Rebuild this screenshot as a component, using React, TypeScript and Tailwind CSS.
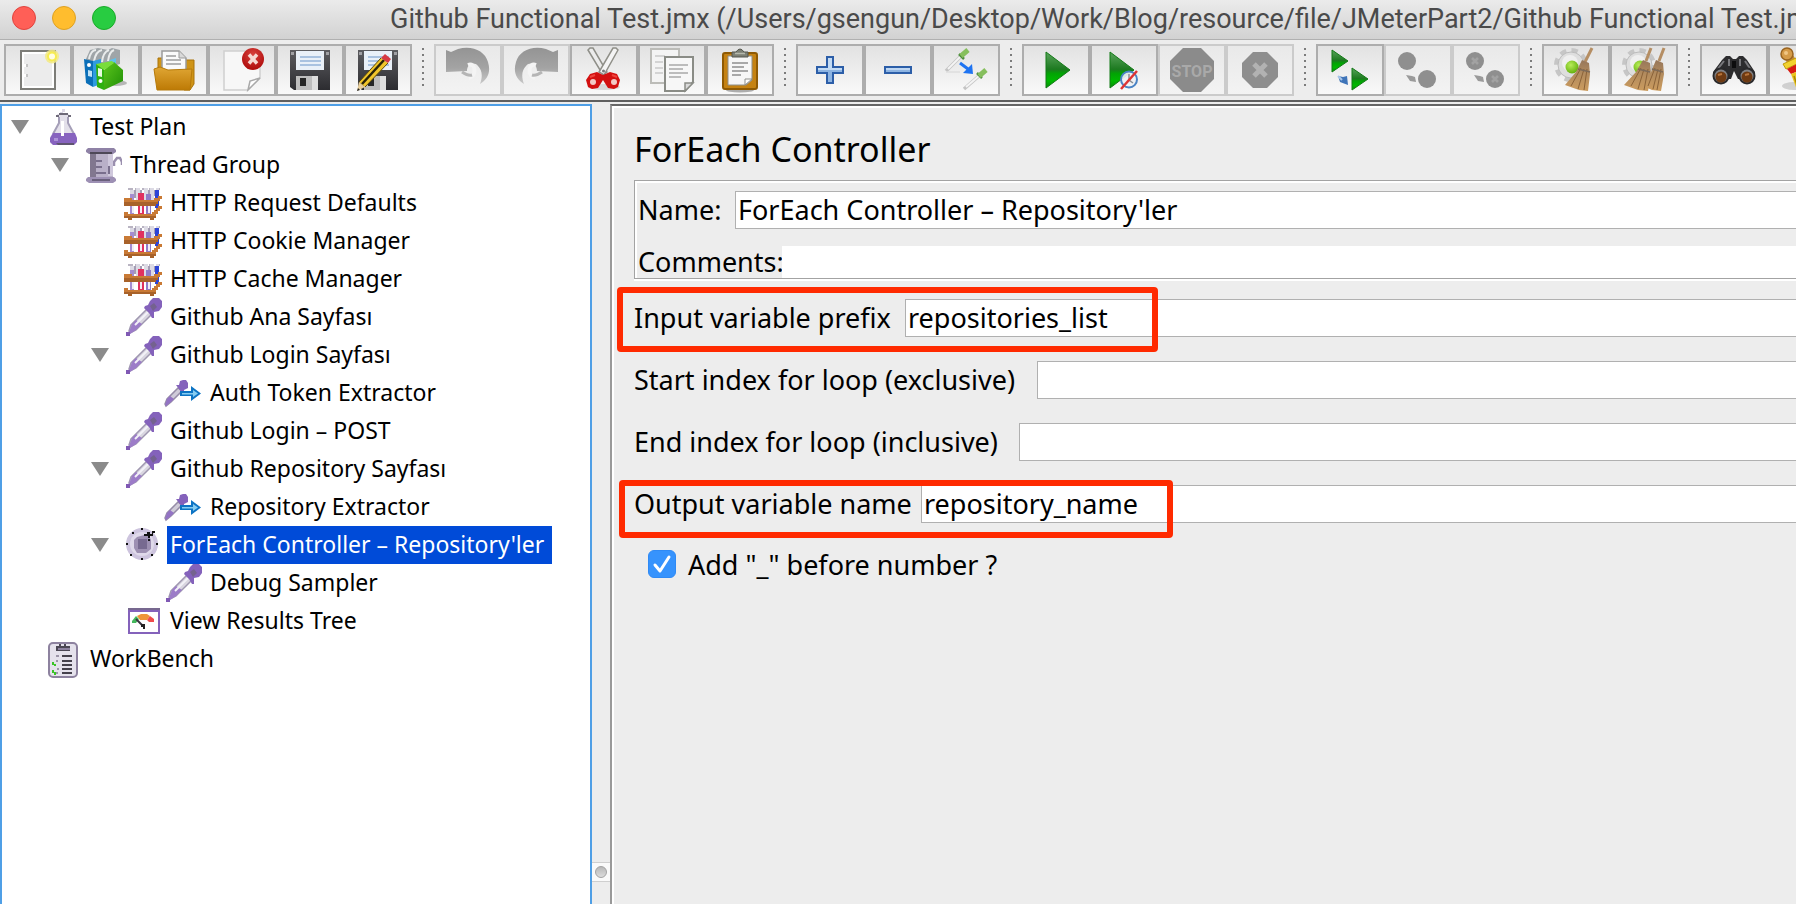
import { Fragment, type ReactNode } from "react";

/* ---------- toolbar icons (68 x 52 grid, one cell per button) ---------- */

const Defs = () => (
  <svg className="absolute size-0" aria-hidden="true">
    <defs>
      <linearGradient id="gold" x1="0" y1="0" x2="0" y2="1">
        <stop offset="0" stopColor="#e0a634" />
        <stop offset="1" stopColor="#bd7a05" />
      </linearGradient>
      <linearGradient id="disk" x1="0" y1="0" x2="0" y2="1">
        <stop offset="0" stopColor="#5c5c60" />
        <stop offset="1" stopColor="#2c2c30" />
      </linearGradient>
      <linearGradient id="play" x1="0" y1="0" x2="0" y2="1">
        <stop offset="0" stopColor="#5aa45c" />
        <stop offset="0.48" stopColor="#1d7a20" />
        <stop offset="0.6" stopColor="#02a404" />
        <stop offset="0.8" stopColor="#00b800" />
        <stop offset="1" stopColor="#068c08" />
      </linearGradient>
      <linearGradient id="fade" x1="0" y1="0" x2="0" y2="1">
        <stop offset="0" stopColor="#949494" />
        <stop offset="0.55" stopColor="#a3a3a3" />
        <stop offset="1" stopColor="#c9c9c9" />
      </linearGradient>
      <linearGradient id="green" x1="0" y1="0" x2="1" y2="1">
        <stop offset="0" stopColor="#5cc51d" />
        <stop offset="1" stopColor="#1f8f06" />
      </linearGradient>
      <linearGradient id="straw" x1="0" y1="0" x2="0" y2="1">
        <stop offset="0" stopColor="#96765a" />
        <stop offset="0.4" stopColor="#b08a5e" />
        <stop offset="1" stopColor="#cc9c5e" />
      </linearGradient>
      <radialGradient id="ball" cx="0.4" cy="0.35" r="0.7">
        <stop offset="0" stopColor="#b8ec5a" />
        <stop offset="1" stopColor="#5fae08" />
      </radialGradient>
      <radialGradient id="redball" cx="0.5" cy="0.3" r="0.8">
        <stop offset="0" stopColor="#d8413c" />
        <stop offset="1" stopColor="#a80404" />
      </radialGradient>
    </defs>
  </svg>
);

const NewIcon = () => (
  <>
    <rect x="17" y="7" width="34" height="38" fill="#fff" stroke="#7d7d78" strokeWidth="2" />
    <rect x="20" y="10" width="28" height="32" fill="#ececec" />
    <path d="M20 20h4v3h-4zM20 30h4v3h-4z" fill="#fff" />
    <path d="M22 20h2v3h-2zM22 30h2v3h-2z" fill="#c4c4c4" />
    <circle cx="48" cy="12.5" r="7" fill="#f3ea84" opacity="0.85" />
    <circle cx="48" cy="12.5" r="5" fill="#f7ec50" />
    <circle cx="48" cy="12.5" r="3" fill="#fffde0" />
  </>
);

const TemplatesIcon = () => (
  <>
    <ellipse cx="44" cy="39" rx="11" ry="3" fill="#000" opacity="0.25" />
    <path d="M14 15L18 6L26 4L36 6L40 4L48 6V20L34 24L14 20Z" fill="#9fa5a8" />
    <path d="M17 15q2-9 7-9M22 17q2-10 8-11M30 18q1-10 7-12M36 17q1-9 6-11" fill="none" stroke="#e9ecec" strokeWidth="2" />
    <path d="M38 16L44 14V20L34 22Z" fill="#5fc1ec" />
    <path d="M12 15L21 17V43L14 39Z" fill="#0b6fb8" />
    <path d="M21 17L29 15V40L21 43Z" fill="#2f9be0" />
    <circle cx="17" cy="21" r="2" fill="#fff" />
    <path d="M16 26l4 1v6l-4-1z" fill="#bfe2f7" />
    <path d="M24 20L32 22V46L25 43Z" fill="#2fb010" />
    <path d="M32 26L42 18L51 26V37L32 46Z" fill="url(#green)" />
    <path d="M24 20L40 17L42 19L32 26Z" fill="#79dd3a" />
    <path d="M26 24l4 1v8l-4-1z" fill="#e8fadf" />
    <circle cx="28.500" cy="37" r="2" fill="#fff" />
  </>
);

const OpenIcon = () => (
  <>
    <path d="M18 14H24V24H18ZM44 16H54V40L50 46H44Z" fill="#cf9417" stroke="#a9730a" strokeWidth="1" />
    <path d="M22 7H39L46 14V28H22Z" fill="#fafafa" stroke="#9b9b9b" strokeWidth="1.500" />
    <path d="M39 7V14H46" fill="#d9d9d9" stroke="#9b9b9b" />
    <path d="M26 12h10M26 16h15M26 20h15" stroke="#b4b4b4" strokeWidth="2" />
    <path d="M14 25L20 23L28 26L52 25L50 46H17Z" fill="url(#gold)" stroke="#b67a0a" strokeWidth="1" />
  </>
);

const CloseIcon = () => (
  <>
    <path d="M16 7H52V34L40 46H16Z" fill="#f7f7f7" stroke="#d0d0d0" strokeWidth="1.500" />
    <path d="M40 46L42 37L52 34Z" fill="#fff" stroke="#a9a9a9" strokeWidth="1.500" />
    <circle cx="45" cy="15" r="11" fill="url(#redball)" />
    <path d="M41 10.500L49 19.500M49 10.500L41 19.500" stroke="#f6d9d3" strokeWidth="3.500" />
  </>
);

const Disk = () => (
  <>
    <path d="M14 6H54V46H18L14 43Z" fill="url(#disk)" />
    <rect x="20" y="7" width="28" height="19" fill="#e9f0f8" />
    <path d="M24 13h21M24 17h21M24 21h21" stroke="#a9c2e0" strokeWidth="2" />
    <path d="M15 8h3v3h-3zM50 8h3v3h-3z" fill="#a0a0a4" />
    <rect x="20" y="32" width="22" height="14" fill="#bdbdbd" />
    <rect x="36" y="32" width="6" height="14" fill="#dedede" />
    <rect x="24" y="34" width="6" height="8" fill="#262626" />
  </>
);

const SaveAsIcon = () => (
  <>
    <Disk />
    <path d="M37 14L44 19L21 43L15 38Z" fill="#f0c52b" />
    <path d="M40 16L18 40" stroke="#2a2408" strokeWidth="2.500" />
    <path d="M37 14L15 38M44 19L21 43" stroke="#5d4b0a" strokeWidth="1" />
    <path d="M15 38L21 43L13 47Z" fill="#e8cf9c" />
    <path d="M13 47l1-3 2 2z" fill="#222" />
    <path d="M37 14L41 10L47 15L44 19Z" fill="#d63a44" />
  </>
);

const UndoIcon = () => (
  <>
    <path
      d="M12 6L17 8L24 5C38 1 51 7 54 18C57 28 54 35 46 40C49 32 48 26 44 22C40 17 33 20 33 27L12 28Z"
      fill="url(#fade)"
    />
    <path d="M34 21C42 18 43 32 35 34" fill="none" stroke="#f4f4f4" strokeWidth="4" />
    <path d="M28 28C31 30 35 32 38 31" fill="none" stroke="#b5b5b5" strokeWidth="3" />
  </>
);

const RedoIcon = () => (
  <g transform="matrix(-1 0 0 1 68 0)">
    <UndoIcon />
  </g>
);

const CutIcon = () => (
  <>
    <ellipse cx="34" cy="43" rx="16" ry="3" fill="#000" opacity="0.12" />
    <path d="M18 6L20 4H23L37 28L33 31Z" fill="#ececec" stroke="#8f8f88" strokeWidth="1.500" />
    <path d="M48 6L46 4H43L29 28L34 31Z" fill="#f4f4f4" stroke="#8f8f88" strokeWidth="1.500" />
    <path d="M20 30L27 28L33 31L40 28L47 30L50 36L48 43L44 45L38 44L33 36L28 44L22 45L18 43L16 36Z" fill="#d31010" />
    <circle cx="23" cy="38" r="3" fill="#f2c9c5" />
    <circle cx="44" cy="38" r="3" fill="#f2c9c5" />
    <path d="M20 33l5-2M42 31l5 2" stroke="#f0433c" strokeWidth="2" />
    <circle cx="33.500" cy="27" r="1.500" fill="#777" />
  </>
);

const CopyIcon = () => (
  <>
    <rect x="13" y="5" width="28" height="34" fill="#f4f4f4" stroke="#bcbcb8" strokeWidth="2" />
    <path d="M17 12h10M17 18h8M17 24h8M17 29h8" stroke="#d4d4d4" strokeWidth="2" />
    <path d="M27 13H55V38L47 47H27Z" fill="#f7f7f7" stroke="#8a8c86" strokeWidth="2" />
    <path d="M31 21h19M31 25h14M31 29h19M31 33h12" stroke="#bcbcbc" strokeWidth="2" />
    <path d="M47 47V39H55Z" fill="#dadada" stroke="#8a8c86" strokeWidth="1.500" />
  </>
);

const PasteIcon = () => (
  <>
    <ellipse cx="34" cy="46" rx="14" ry="2.500" fill="#000" opacity="0.3" />
    <rect x="17" y="9" width="34" height="36" rx="2" fill="#c58212" stroke="#8f5a04" strokeWidth="2" />
    <path d="M22 12H46V36L40 41H22Z" fill="#f6f6f6" stroke="#8f8f8a" strokeWidth="1" />
    <path d="M26 19h16M26 23h12M26 27h16M26 31h9" stroke="#a8a8a8" strokeWidth="2" />
    <path d="M39 41V35H46Z" fill="#fff" stroke="#8f8f8a" />
    <path d="M26 13V8H30Q34 2 38 8H42V13Z" fill="#7c7f74" stroke="#55574f" />
    <path d="M29 9.500h10" stroke="#b5b8ac" strokeWidth="1.500" />
  </>
);

const PlusIcon = () => (
  <>
    <path d="M31 13H37V23H47V29H37V39H31V29H21V23H31Z" fill="#8db4e2" stroke="#2c5ea8" strokeWidth="2" />
    <path d="M32 14h4v10h10v2H22v-2h10z" fill="#c3dbf4" />
  </>
);

const MinusIcon = () => (
  <>
    <rect x="21" y="23" width="26" height="6" fill="#8db4e2" stroke="#2c5ea8" strokeWidth="2" />
    <rect x="22" y="24" width="24" height="2" fill="#bfd7f2" />
  </>
);

const ToggleIcon = () => (
  <>
    <path d="M14 27L29 12" stroke="#c4c4c4" strokeWidth="3.500" />
    <path d="M16 25L29 12" stroke="#f4f4f4" strokeWidth="2" />
    <path d="M27 10L32 15" stroke="#4c8c3c" strokeWidth="2.500" />
    <path d="M29 12L36 6" stroke="#86bf5d" strokeWidth="5" />
    <path d="M14 28H28" stroke="#dedede" strokeWidth="1.500" />
    <path d="M32 45L48 31" stroke="#c4c4c4" strokeWidth="3.500" />
    <path d="M34 43L48 31" stroke="#f4f4f4" strokeWidth="2" />
    <path d="M45 29L50 34" stroke="#4c8c3c" strokeWidth="2.500" />
    <path d="M47 32L54 26" stroke="#86bf5d" strokeWidth="5" />
    <path d="M28 19L36 25" stroke="#1f74f2" strokeWidth="3" />
    <path d="M40 20L41 30L31 29Z" fill="#1f74f2" />
  </>
);

const StartIcon = () => <path d="M24 8L48 26L24 44Z" fill="url(#play)" stroke="#137a16" strokeWidth="1" />;

const StartNoPauseIcon = () => (
  <>
    <path d="M20 8L44 26L20 44Z" fill="url(#play)" stroke="#137a16" strokeWidth="1" />
    <circle cx="39" cy="35.500" r="8" fill="#eef1f4" fillOpacity="0.92" stroke="#4a83c4" strokeWidth="2" />
    <path d="M39 30v6l4 3" fill="none" stroke="#8b8f94" strokeWidth="1.500" />
    <path d="M31 45L47 27" stroke="#de3434" strokeWidth="2.500" />
  </>
);

const StopIcon = () => (
  <>
    <path d="M25 4H43L56 17V35L43 48H25L12 35V17Z" fill="#8b8b8b" />
    <text x="34" y="33" textAnchor="middle" fontSize="16" fontWeight="700" fill="#a9a9a9" className="font-['Roboto',sans-serif]">
      STOP
    </text>
  </>
);

const ShutdownIcon = () => (
  <>
    <path d="M27 8H41L52 19V33L41 44H27L16 33V19Z" fill="#8e8e8e" />
    <path d="M28 20L40 32M40 20L28 32" stroke="#b2b2b2" strokeWidth="5" />
  </>
);

const RemoteStartIcon = () => (
  <>
    <path d="M16 6L32 17L16 28Z" fill="url(#play)" stroke="#137a16" strokeWidth="1" />
    <path d="M36 24L52 35L36 46Z" fill="url(#play)" stroke="#137a16" strokeWidth="1" />
    <path d="M22 32L27 33L31 32L32 41L24 38Z" fill="#3f74b8" />
    <path d="M22 32l4 4" stroke="#a9c6ea" strokeWidth="2" />
  </>
);

const RemoteStopIcon = () => (
  <>
    <circle cx="23" cy="17" r="9" fill="#8f8f8f" />
    <circle cx="43" cy="35" r="9" fill="#8f8f8f" />
    <path d="M22 31L28 32L31 33L32 38L26 37Z" fill="#9a9a9a" />
  </>
);

const RemoteShutdownIcon = () => (
  <>
    <RemoteStopIcon />
    <path d="M20 14l6 6M26 14l-6 6M40 32l6 6M46 32l-6 6" stroke="#a2a2a2" strokeWidth="2.500" />
  </>
);

const Gear = () => (
  <>
    <circle cx="29" cy="21" r="14" fill="none" stroke="#c6c6c6" strokeWidth="6" strokeDasharray="6 5" />
    <circle cx="29" cy="21" r="13" fill="#dedede" stroke="#bcbcbc" strokeWidth="1" />
    <circle cx="28" cy="19" r="8" fill="#efefef" />
    <circle cx="30" cy="23" r="6.500" fill="url(#ball)" />
  </>
);

const ClearIcon = () => (
  <>
    <Gear />
    <path d="M50 4L43 18" stroke="#b58e63" strokeWidth="3" />
    <path d="M40 16L47 19L48 30L46 47L37 46L23 41L34 28Z" fill="url(#straw)" />
    <path d="M39 24L29 42M42 25L36 45M45 25L42 46" stroke="#8a6238" strokeWidth="1" />
    <path d="M36 25L48 28" stroke="#7d6a58" strokeWidth="1.500" />
  </>
);

const ClearAllIcon = () => (
  <>
    <Gear />
    <path d="M41 4L36 17M54 4L49 17" stroke="#b58e63" strokeWidth="3" />
    <path d="M33 16L40 19L41 30L38 47L28 46L14 41L26 28Z" fill="url(#straw)" />
    <path d="M46 16L53 19L54 30L51 47L42 46L33 42L41 28Z" fill="url(#straw)" />
    <path d="M31 24L21 42M34 25L28 45M38 25L34 46M45 24L38 42M48 25L43 45M51 25L47 46" stroke="#8a6238" strokeWidth="1" />
    <path d="M28 25L40 28M42 25L53 28" stroke="#7d6a58" strokeWidth="1.500" />
  </>
);

const SearchIcon = () => (
  <>
    <path d="M22 16L26 12H30L33 15H36L39 12H43L47 16L55 28V35H38L34 27L31 35H13V28Z" fill="#2c2c2e" />
    <path d="M24 17L17 26M45 17L51 26M29 15V22M40 15V22" stroke="#77777b" strokeWidth="2" />
    <path d="M32 17h4v7h-4z" fill="#0d0d0e" />
    <circle cx="21" cy="32" r="8.500" fill="#29292b" />
    <circle cx="47" cy="32" r="8.500" fill="#29292b" />
    <circle cx="21" cy="32" r="6.500" fill="#808083" />
    <circle cx="47" cy="32" r="6.500" fill="#808083" />
    <circle cx="21" cy="33" r="5.500" fill="#6e3a12" />
    <circle cx="47" cy="33" r="5.500" fill="#6e3a12" />
    <path d="M18 31l4-1M45 31l4-1" stroke="#b8743a" strokeWidth="2" />
  </>
);

const SearchResetIcon = () => (
  <>
    <ellipse cx="26" cy="42" rx="12" ry="4" fill="#000" opacity="0.15" />
    <path d="M19 10L24 18" stroke="#c48a3a" strokeWidth="9" />
    <circle cx="19" cy="10" r="6" fill="#d59b48" stroke="#9a6420" strokeWidth="1.500" />
    <circle cx="18" cy="9" r="2" fill="#f0c684" />
    <path d="M15 20L28 14L31 19L18 25Z" fill="#f2d22e" stroke="#c09a0c" />
    <path d="M19 25L31 19L36 25L23 30Z" fill="#d81a12" />
    <path d="M23 30L36 25L50 42L29 46Z" fill="#e9c41c" />
    <path d="M26 32l4 12M31 30l8 12" stroke="#a8860a" strokeWidth="1.500" />
  </>
);

type Tool = { name: string; icon: ReactNode; disabled?: boolean };

const toolGroups: Tool[][] = [
  [
    { name: "New", icon: <NewIcon /> },
    { name: "Templates", icon: <TemplatesIcon /> },
    { name: "Open", icon: <OpenIcon /> },
    { name: "Close", icon: <CloseIcon /> },
    { name: "Save", icon: <Disk /> },
    { name: "Save as", icon: <SaveAsIcon /> },
  ],
  [
    { name: "Undo", icon: <UndoIcon />, disabled: true },
    { name: "Redo", icon: <RedoIcon />, disabled: true },
    { name: "Cut", icon: <CutIcon /> },
    { name: "Copy", icon: <CopyIcon /> },
    { name: "Paste", icon: <PasteIcon /> },
  ],
  [
    { name: "Expand all", icon: <PlusIcon /> },
    { name: "Collapse all", icon: <MinusIcon /> },
    { name: "Toggle", icon: <ToggleIcon /> },
  ],
  [
    { name: "Start", icon: <StartIcon /> },
    { name: "Start no pauses", icon: <StartNoPauseIcon /> },
    { name: "Stop", icon: <StopIcon />, disabled: true },
    { name: "Shutdown", icon: <ShutdownIcon />, disabled: true },
  ],
  [
    { name: "Remote start all", icon: <RemoteStartIcon /> },
    { name: "Remote stop all", icon: <RemoteStopIcon />, disabled: true },
    { name: "Remote shutdown all", icon: <RemoteShutdownIcon />, disabled: true },
  ],
  [
    { name: "Clear", icon: <ClearIcon /> },
    { name: "Clear all", icon: <ClearAllIcon /> },
  ],
  [
    { name: "Search", icon: <SearchIcon /> },
    { name: "Reset search", icon: <SearchResetIcon /> },
  ],
];

const ToolButton = ({ tool }: { tool: Tool }) => (
  <button
    type="button"
    aria-label={tool.name}
    disabled={tool.disabled}
    className="h-[52px] w-[68px] shrink-0 border-2 border-[#adadad] bg-linear-to-b from-[#e2e2e2] to-[#f9f9f9] disabled:border-[#cbcbcb] disabled:from-[#e9e9e9] disabled:to-[#f3f3f3]"
  >
    <svg viewBox="2 2 64 48" className="block h-12 w-16" aria-hidden="true">
      {tool.icon}
    </svg>
  </button>
);

const ToolSeparator = () => (
  <div className="flex w-[22px] shrink-0 flex-col items-center gap-1 pt-1">
    {[0, 1, 2, 3, 4, 5, 6].map((n) => (
      <span key={n} className="size-[2px] bg-[#7c7c7c]" />
    ))}
  </div>
);

/* ---------- tree icons (38 x 38 grid) ---------- */

const FlaskIcon = () => (
  <>
    <path d="M18 1h3v3h-3zM16 4h3v3h-3z" fill="#dcd8e6" />
    <path d="M15 6h10v3h-2v6l9 14v6l-3 2H9l-3-2v-6l9-14V9h-2V6z" fill="#e3e0ea" />
    <path d="M12 7h3v2h-3zM24 7h3v2h-3zM15 5h9v2h-9z" fill="#6e6a78" />
    <path d="M15 9v6L9 26M24 9v6l6 11" fill="none" stroke="#a59fb8" strokeWidth="2" />
    <path d="M9 25h22l2 5v4l-3 3H9l-3-3v-4z" fill="#8763bf" />
    <path d="M17 13h3v15h-3z" fill="#fff" />
    <path d="M10 30h4v3h-4z" fill="#ad93d8" />
    <path d="M12 35h18v2H14z" fill="#5f5570" />
  </>
);

const BeakerIcon = () => (
  <>
    <path d="M30 20V16L33 12H36L38 16V19" fill="none" stroke="#9a8fae" strokeWidth="2.500" />
    <path d="M6 8H29V32H6Z" fill="#b9b0c8" />
    <path d="M6 8h6v24H6z" fill="#81778f" />
    <path d="M24 8h5v22h-5z" fill="#cfc8dc" />
    <path d="M4 2h26l2 2v2l-3 2H5L2 6V4z" fill="#8f82a6" />
    <path d="M6 6h22v2H6z" fill="#4e4858" />
    <path d="M12 14h6v2h-6zM12 20h6v2h-6zM12 26h10v2H12z" fill="#796f8c" />
    <path d="M24 20h2v8h-2z" fill="#796f8c" />
    <path d="M4 31h26l2 2v2l-3 2H5l-3-2v-2z" fill="#9d90b4" />
    <path d="M8 33h18v2H8z" fill="#6a607c" />
  </>
);

const RackIcon = () => (
  <g shapeRendering="crispEdges">
    <path d="M4 4h5v2H4zM11 4h5v2h-5zM18 4h5v2h-5zM25 4h5v2h-5zM32 4h4v2h-4z" fill="#b9b4c2" />
    <path d="M6 6h4v10H6zM12 4h4v12h-4zM20 4h4v12h-4zM26 4h4v12h-4zM32 4h3v10h-3z" fill="#dcdae4" />
    <path d="M10 6h2v8h-2zM16 6h2v8h-2zM24 6h2v8h-2zM30 6h2v6h-2z" fill="#a49db4" />
    <path d="M6 10h4v20H6zM20 10h-4v4h4z" fill="#a58cd0" />
    <path d="M14 9h6v21h-6z" fill="#e0315f" />
    <path d="M22 10h5v20h-5z" fill="#8f7cc8" />
    <path d="M31 6h4v18h-4z" fill="#2d44d6" />
    <path d="M8 22h2v7H8zM16 22h2v7h-2zM24 22h2v7h-2z" fill="#f1edf6" />
    <path d="M0 14h8v2h22v-2h4v-2h4v3h-2v2h-2v2h-2v2H0z" fill="#c97a35" />
    <path d="M0 18h34v2h-2v2H0z" fill="#a8622a" />
    <path d="M0 28h4v2h24v-2h2v-2h2v-2h2v-2h4v3h-2v2h-2v3h-2v2h-2v2H0z" fill="#c97a35" />
    <path d="M0 32h32v2h-2v2h-4v-2H8v2H4v-2H0z" fill="#a8622a" />
  </g>
);

const Dropper = () => (
  <>
    <path d="M5 33L7 27L23 11L28 16L12 32L6 35Z" fill="#d9d6e0" stroke="#9f97b0" strokeWidth="1.500" />
    <path d="M5 34L8 26L12 22L18 26L12 32L6 36Z" fill="#9c7cc8" />
    <path d="M11 27L24 14" stroke="#f3f1f7" strokeWidth="2" />
    <path d="M2 34h4v4H2z" fill="#8059b4" />
    <path d="M21 8L24 7L26 3L29 0H35L38 3V9L35 13L30 14V20H28L25 15L20 10Z" fill="#8462bb" />
    <path d="M26 8l4-3 3 4-4 4z" fill="#74628f" />
  </>
);

const ExtractorIcon = () => (
  <>
    <path d="M1 30L3 25L14 14L18 17L7 28L2 32Z" fill="#cfcbd8" stroke="#958ca6" strokeWidth="1.500" />
    <path d="M1 31L3 25L6 22L10 25L7 28L2 32Z" fill="#9373c4" />
    <path d="M12 11H15L16 7L19 6H22L24 9V14L20 16V19H18Z" fill="#8462bb" />
    <path d="M16 17H27V12L37 19.500L27 27V22H16Z" fill="#0d74c4" />
    <path d="M18 19H29V16L34 19.500L29 23V20.500H18Z" fill="#86cdf2" />
  </>
);

const ForEachIcon = () => (
  <>
    <circle cx="18" cy="18" r="16" fill="#cdc4de" />
    <circle cx="18" cy="18" r="12" fill="#dfd9ea" />
    <path d="M13 11L24 8L27 14V23L22 27H13L10 22V14Z" fill="#9d90b2" />
    <path d="M14 13h9v10h-9z" fill="#776a90" />
    <path d="M20 8h3v-2h3v2h2v-3h3v2h-2v3h-3v2h-2v-2h-4z" fill="#111" />
    <path
      d="M17 2h2v2h-2zM8 6h2v2H8zM2 17h2v2H2zM6 28h2v2H6zM17 32h2v2h-2zM27 28h2v2h-2zM32 17h2v2h-2zM24 13h2v2h-2z"
      fill="#111"
    />
  </>
);

const ResultsIcon = () => (
  <>
    <path d="M4 6h32v26H4z" fill="#8462bb" />
    <path d="M4 6h32v2H4z" fill="#77688f" />
    <path d="M6 10h28v20H6z" fill="#fff" />
    <path d="M8 19L12 14L15 17L12 21H8Z" fill="#43b85c" />
    <path d="M13 14L17 12H23L26 14L23 18H16Z" fill="#ee9438" />
    <path d="M26 14L30 17V20H25L23 18Z" fill="#ef4b4b" />
    <path d="M12 17L18 23" stroke="#3a3440" strokeWidth="2" />
    <path d="M17 22h4v5h-2v-2h-2z" fill="#222" />
  </>
);

const WorkBenchIcon = () => (
  <>
    <rect x="5" y="3" width="28" height="34" rx="4" fill="#e5e2ec" stroke="#8d829f" strokeWidth="2" />
    <path d="M12 6h3V4h2v2h3V4h2v2h4v5H12z" fill="#4b4754" />
    <path d="M14 8h12v2H14z" fill="#8d829f" />
    <path d="M18 15h10v2H18zM18 20h10v2H18zM18 24h10v2H18zM18 28h10v2H18zM18 32h10v2H18z" fill="#45414c" />
    <path d="M12 15h3v2h-3zM12 20h2v2h-2zM13 28h2v2h-2zM12 32h2v2h-2z" fill="#9c95a8" />
    <path d="M8 22h2v2h2v2h-2v-1H8zM8 30h2v2h2v3h-2v-2H8z" fill="#3ac426" />
  </>
);

type Node = { label: string; level: 0 | 1 | 2 | 3; icon: ReactNode; open?: boolean; selected?: boolean };

const nodes: Node[] = [
  { label: "Test Plan", level: 0, icon: <FlaskIcon />, open: true },
  { label: "Thread Group", level: 1, icon: <BeakerIcon />, open: true },
  { label: "HTTP Request Defaults", level: 2, icon: <RackIcon /> },
  { label: "HTTP Cookie Manager", level: 2, icon: <RackIcon /> },
  { label: "HTTP Cache Manager", level: 2, icon: <RackIcon /> },
  { label: "Github Ana Sayfası", level: 2, icon: <Dropper /> },
  { label: "Github Login Sayfası", level: 2, icon: <Dropper />, open: true },
  { label: "Auth Token Extractor", level: 3, icon: <ExtractorIcon /> },
  { label: "Github Login – POST", level: 2, icon: <Dropper /> },
  { label: "Github Repository Sayfası", level: 2, icon: <Dropper />, open: true },
  { label: "Repository Extractor", level: 3, icon: <ExtractorIcon /> },
  { label: "ForEach Controller – Repository'ler", level: 2, icon: <ForEachIcon />, open: true, selected: true },
  { label: "Debug Sampler", level: 3, icon: <Dropper /> },
  { label: "View Results Tree", level: 2, icon: <ResultsIcon /> },
  { label: "WorkBench", level: 0, icon: <WorkBenchIcon /> },
];

const indent = ["pl-[9px]", "pl-[49px]", "pl-[89px]", "pl-[129px]"];

const TreeRow = ({ node }: { node: Node }) => (
  <li
    role="treeitem"
    aria-level={node.level + 1}
    aria-selected={!!node.selected}
    aria-expanded={node.open}
    className={`flex h-[38px] items-center ${indent[node.level]}`}
  >
    <span className="w-[33px] shrink-0">
      {node.open && (
        <svg viewBox="0 0 18 14" className="block h-[14px] w-[18px]" aria-hidden="true">
          <path d="M0 0H18L9 14Z" fill="#8b8b8b" />
        </svg>
      )}
    </span>
    <svg viewBox="0 0 38 38" className="size-[38px] shrink-0" aria-hidden="true">
      {node.icon}
    </svg>
    <span
      className={`ml-[5px] h-[38px] whitespace-nowrap pl-[3px] pr-2 text-[23px] leading-[36px] ${
        node.selected ? "bg-[#004bd8] text-white" : "text-black"
      }`}
    >
      {node.label}
    </span>
  </li>
);

/* ---------- form ---------- */

const Highlight = ({ className }: { className: string }) => (
  <div className={`pointer-events-none absolute rounded-[4px] border-[6px] border-[#ff2a00] ${className}`} />
);

type FieldProps = { id: string; label: string; value?: string; labelWidth: string; children?: ReactNode };

const Field = ({ id, label, value = "", labelWidth, children }: FieldProps) => (
  <div className="relative flex h-[38px]">
    <label htmlFor={id} className={`shrink-0 whitespace-nowrap leading-[37px] ${labelWidth}`}>
      {label}
    </label>
    <input
      id={id}
      type="text"
      defaultValue={value}
      className="min-w-0 flex-1 border border-r-0 border-[#b0b0b0] bg-white pl-[2px] outline-none"
    />
    {children}
  </div>
);

export default function App() {
  return (
    <div className="flex min-h-screen flex-col overflow-hidden bg-[#ededed] font-['Noto_Sans',sans-serif] text-black">
      <Defs />
      <header className="flex h-10 items-center overflow-hidden border-b border-[#b0b0b0] bg-linear-to-b from-[#ebebeb] to-[#d2d2d2] pb-[3px] pl-3">
        <div className="flex shrink-0 gap-4">
          <button type="button" aria-label="Close window" className="size-6 rounded-full border border-[#e0443e] bg-[#ff5f57]" />
          <button type="button" aria-label="Minimize window" className="size-6 rounded-full border border-[#dea123] bg-[#ffbd2e]" />
          <button type="button" aria-label="Zoom window" className="size-6 rounded-full border border-[#1aab29] bg-[#28cc41]" />
        </div>
        <p className="ml-[274px] whitespace-nowrap pt-[2px] font-['Roboto',sans-serif] text-[27px] leading-8 text-[#4a4a4a]">
          Github Functional Test.jmx (/Users/gsengun/Desktop/Work/Blog/resource/file/JMeterPart2/Github Functional Test.jmx)
        </p>
      </header>

      <div role="toolbar" aria-label="Main toolbar" className="flex overflow-hidden border-b-2 border-[#5f5f5f] px-1 py-1">
        {toolGroups.map((group, i) => (
          <Fragment key={i}>
            {i > 0 && <ToolSeparator />}
            {group.map((tool) => (
              <ToolButton key={tool.name} tool={tool} />
            ))}
          </Fragment>
        ))}
      </div>

      <div className="flex flex-1 pt-[2px]">
        <nav aria-label="Test plan tree" className="w-[592px] shrink-0 border-2 border-b-0 border-[#4f9fe6] bg-white pt-[2px]">
          <ul role="tree">
            {nodes.map((node) => (
              <TreeRow key={node.label} node={node} />
            ))}
          </ul>
        </nav>

        <div className="flex w-[18px] shrink-0 flex-col justify-end pb-[22px]">
          <button type="button" aria-label="Resize panels" className="flex h-5 w-full items-center justify-center border-y border-[#cfcfcf] bg-[#fafafa]">
            <span className="size-3 rounded-full border border-[#a2a2a2] bg-linear-to-b from-[#b8b8b8] to-[#dcdcdc]" />
          </button>
        </div>

        <main className="min-w-0 flex-1 border-l-2 border-t-2 border-l-[#999999] border-t-[#666666]">
          <form className="h-full border-l-2 border-t-2 border-white pl-5 text-[27px]">
            <h1 className="mb-[7px] pt-[17px] text-[34px] leading-[48px]">ForEach Controller</h1>

            <div className="flex flex-col gap-[17px] border border-r-0 border-[#a3a3a3] pl-[3px] pt-[10px] shadow-[inset_2px_2px_0_#fff,0_2px_0_#fff]">
              <Field id="name" label="Name:" value="ForEach Controller – Repository'ler" labelWidth="w-[97px]" />
              <div className="flex h-8">
                <label htmlFor="comments" className="w-[144px] shrink-0 leading-8">
                  Comments:
                </label>
                <input id="comments" type="text" className="min-w-0 flex-1 bg-white outline-none" />
              </div>
            </div>

            <div className="mt-5 flex flex-col gap-6">
              <Field id="input-prefix" label="Input variable prefix" value="repositories_list" labelWidth="w-[271px]">
                <Highlight className="-left-[17px] -top-3 h-[65px] w-[541px]" />
              </Field>
              <Field id="start-index" label="Start index for loop (exclusive)" labelWidth="w-[403px]" />
              <Field id="end-index" label="End index for loop (inclusive)" labelWidth="w-[385px]" />
              <Field id="output-name" label="Output variable name" value="repository_name" labelWidth="w-[287px]">
                <Highlight className="-left-[15px] -top-[5px] h-[58px] w-[554px]" />
              </Field>
            </div>

            <div className="mt-[27px] flex h-7 items-center gap-3 pl-[14px]">
              <span className="relative size-7 shrink-0">
                <input
                  id="add-underscore"
                  type="checkbox"
                  defaultChecked
                  className="peer block size-7 appearance-none rounded-[6px] border border-[#b0b0b0] bg-white checked:border-[#2f8af5] checked:bg-[#3693fd]"
                />
                <svg
                  viewBox="0 0 28 28"
                  className="pointer-events-none absolute inset-0 hidden size-7 peer-checked:block"
                  aria-hidden="true"
                >
                  <path d="M7 15L12 21L21 7" fill="none" stroke="#fff" strokeWidth="3" strokeLinecap="round" strokeLinejoin="round" />
                </svg>
              </span>
              <label htmlFor="add-underscore" className="leading-[35px]">
                Add "_" before number ?
              </label>
            </div>
          </form>
        </main>
      </div>
    </div>
  );
}
